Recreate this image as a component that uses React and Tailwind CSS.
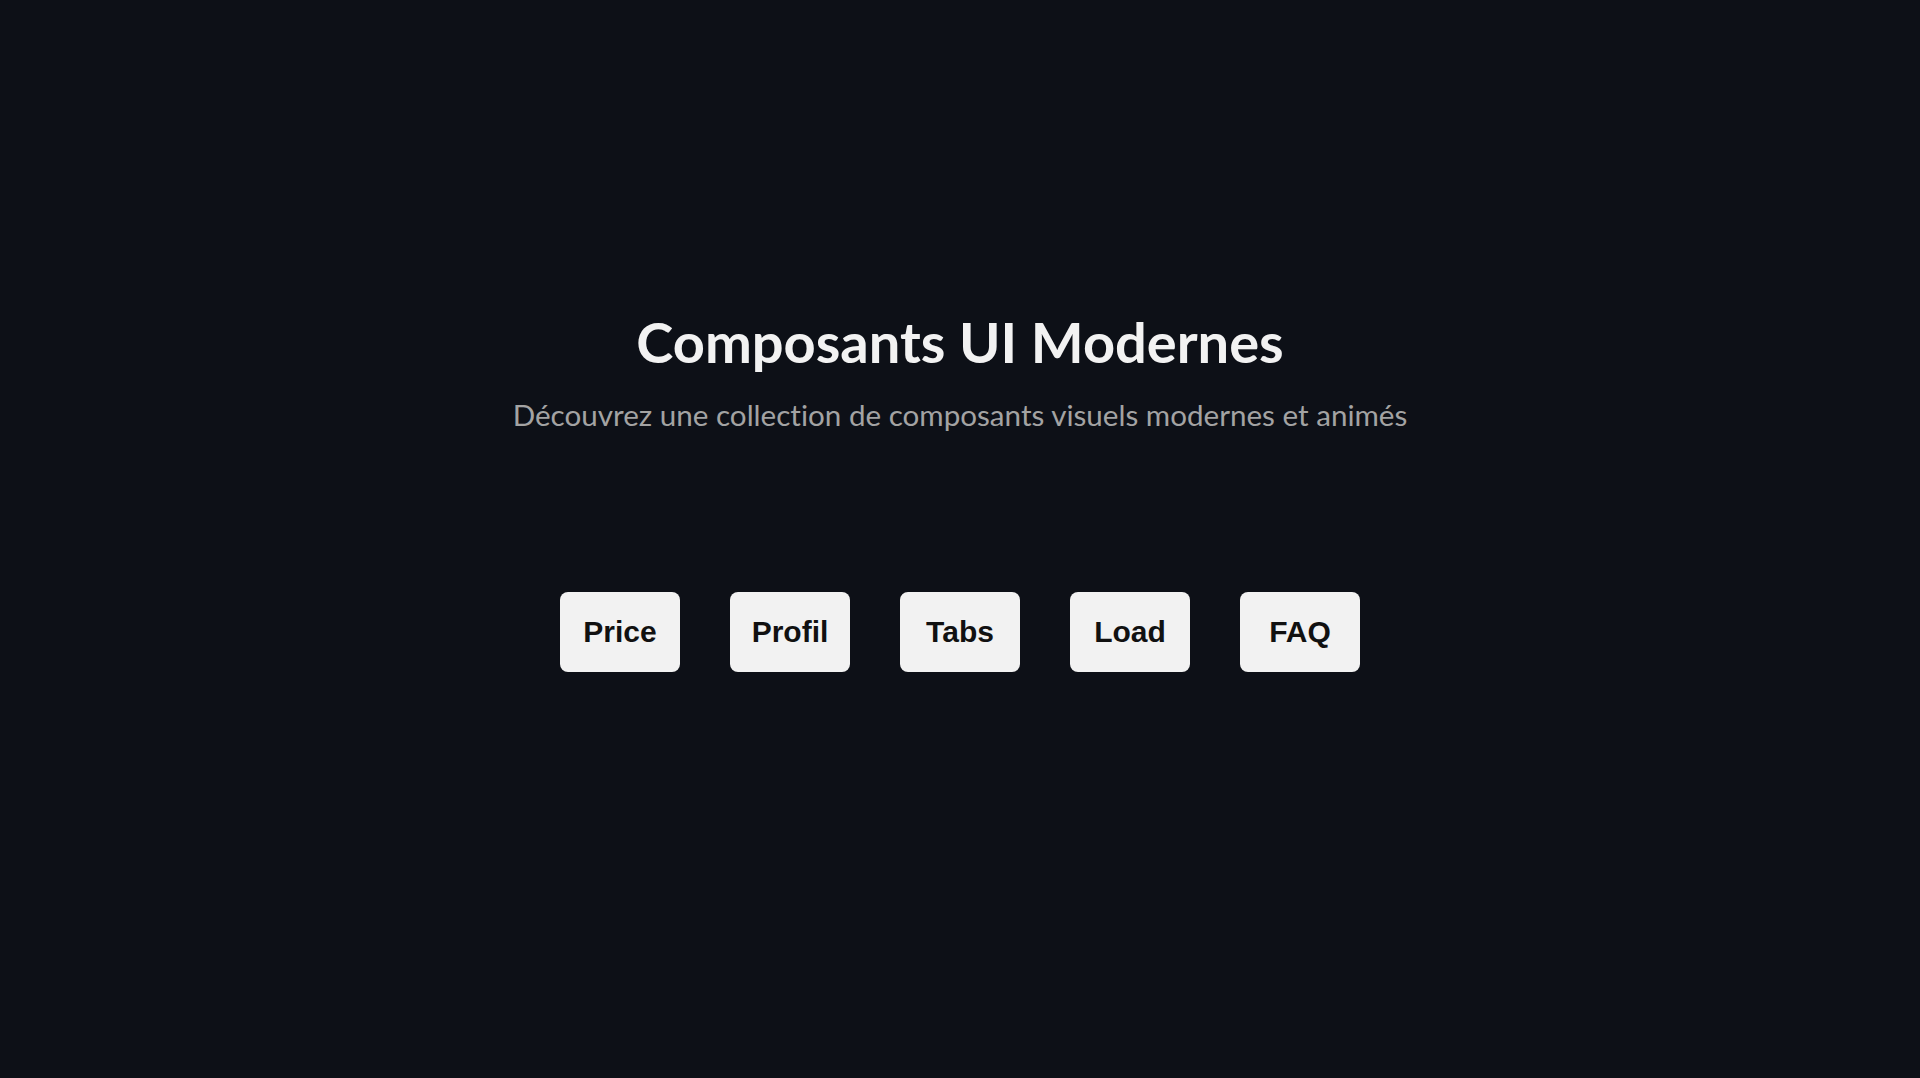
import React from 'react';

const items = ['Price', 'Profil', 'Tabs', 'Load', 'FAQ'];

const App = () => {
  return (
    <div className="min-h-screen bg-[#0d1017] flex flex-col items-center pt-[314px]">
      {/* Header */}
      <h1 className="text-[56px] leading-none font-bold text-[#f2f2f2] font-['Lato',sans-serif]">
        Composants UI Modernes
      </h1>
      <p className="mt-[30px] text-[29.6px] leading-none text-[#a3a3a3] font-['Lato',sans-serif] [font-variant-ligatures:none]">
        Découvrez une collection de composants visuels modernes et animés
      </p>

      {/* Buttons */}
      <div className="mt-[162px] flex gap-[50px]">
        {items.map((item) => (
          <button
            key={item}
            className="w-[120px] h-[80px] rounded-lg bg-[#f2f2f2] text-[#111111] text-[30px] font-bold font-['Liberation_Sans',Arial,sans-serif] flex items-center justify-center pb-[1px]"
          >
            {item}
          </button>
        ))}
      </div>
    </div>
  );
};

export default App;
